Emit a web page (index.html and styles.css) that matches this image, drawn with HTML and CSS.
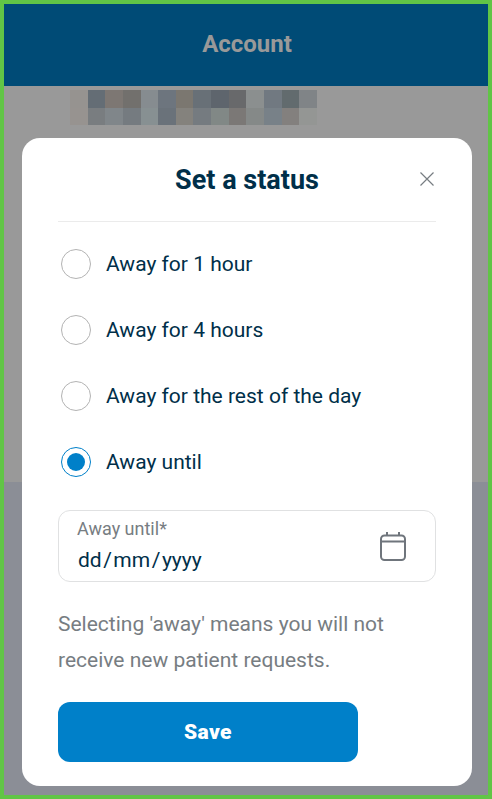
FILE: index.html
```html
<!DOCTYPE html>
<html lang="en">
<head>
    <meta charset="UTF-8">
    <meta name="viewport" content="width=device-width, initial-scale=1.0">
    <title>Account</title>
    <link rel="stylesheet" href="styles.css">
</head>

<body>
    <div class="screen">
        <header class="topbar">
            <h1>Account</h1>
        </header>
        <main class="page">
            <div class="masked-name">
                <span style="background:#969390"></span>
                <span style="background:#646d75"></span>
                <span style="background:#7d7773"></span>
                <span style="background:#72706d"></span>
                <span style="background:#868c90"></span>
                <span style="background:#6d757e"></span>
                <span style="background:#7b7770"></span>
                <span style="background:#687077"></span>
                <span style="background:#5e656d"></span>
                <span style="background:#68696b"></span>
                <span style="background:#8b8f8f"></span>
                <span style="background:#717981"></span>
                <span style="background:#626b6e"></span>
                <span style="background:#808487"></span>
                <span style="background:#979390"></span>
                <span style="background:#797d80"></span>
                <span style="background:#80868a"></span>
                <span style="background:#757b80"></span>
                <span style="background:#879092"></span>
                <span style="background:#6a727a"></span>
                <span style="background:#84827d"></span>
                <span style="background:#757b80"></span>
                <span style="background:#818886"></span>
                <span style="background:#7b7876"></span>
                <span style="background:#858988"></span>
                <span style="background:#788188"></span>
                <span style="background:#83807e"></span>
                <span style="background:#949694"></span>
            </div>
        </main>

        <div class="modal">
            <div class="modal-header">
                <h2>Set a status</h2>
                <button class="close" type="button" aria-label="Close">
                    <svg width="14" height="14" viewBox="0 0 14 14">
                        <path d="M0.5 0.5 L13.5 13.5 M13.5 0.5 L0.5 13.5" fill="none" stroke="#777d82" stroke-width="1.2"/>
                    </svg>
                </button>
            </div>
            <form class="options">
                <label class="option"><input type="radio" name="status">Away for 1 hour</label>
                <label class="option"><input type="radio" name="status">Away for 4 hours</label>
                <label class="option"><input type="radio" name="status">Away for the rest of the day</label>
                <label class="option"><input type="radio" name="status" checked>Away until</label>
            </form>
            <div class="date-field">
                <div class="date-text">
                    <span class="date-label">Away until*</span>
                    <span class="date-value">dd<i>/</i>mm<i>/</i>yyyy</span>
                </div>
                <svg class="calendar" width="28" height="31" viewBox="0 0 28 31">
                    <g fill="none" stroke="#6f757c" stroke-width="2">
                        <rect x="2" y="4.5" width="24" height="24.5" rx="3.5"/>
                        <path d="M2 10.5 H26 M8 1 V4.5 M20 1 V4.5"/>
                    </g>
                </svg>
            </div>
            <p class="hint">Selecting 'away' means you will not receive new patient requests.</p>
            <button class="save" type="button">Save</button>
        </div>
    </div>
</body>
</html>
```
FILE: styles.css
```css
*{
    box-sizing: border-box;
    font-family: Roboto, sans-serif;
}
body {
    margin: 0;
}
.screen {
    position: relative;
    height: 799px;
    border: 4px solid #61c546;
    background-color: #8b8e96;
}
.topbar {
    height: 82px;
    display: flex;
    align-items: center;
    justify-content: center;
    padding: 0 0 2px 2px;
    background-color: #004b76;
}
.topbar h1 {
    margin: 0;
    font-size: 24px;
    line-height: 30px;
    color: #999999;
}
.page {
    height: 396px;
    padding: 4px 66px;
    background-color: #999999;
}
.masked-name {
    display: grid;
    grid-template-columns: repeat(14, 1fr);
    grid-template-rows: 1fr 1fr;
    width: 247px;
    height: 35px;
}

/* dialog over the dimmed page */
.modal {
    position: absolute;
    top: 134px;
    left: 18px;
    width: 450px;
    height: 648px;
    padding: 0 36px;
    border-radius: 18px;
    background-color: #ffffff;
    color: #002f49;
}
.modal-header {
    display: grid;
    grid-template-columns: 18px 1fr 18px;
    align-items: center;
    height: 84px;
    border-bottom: 1px solid #ebebeb;
}
.modal-header h2 {
    grid-column: 2;
    margin: 0;
    font-size: 27px;
    line-height: 32px;
    text-align: center;
}
.close {
    display: flex;
    justify-content: center;
    padding: 0 0 1px;
    border: 0;
    background: none;
}
.options {
    padding-top: 9px;
}
.option {
    display: flex;
    align-items: center;
    gap: 15px;
    height: 66px;
    padding-left: 3px;
    font-size: 21px;
}
.option input {
    appearance: none;
    width: 30px;
    height: 30px;
    margin: 0;
    border: 1px solid #b3b3b3;
    border-radius: 50%;
}
.option input:checked {
    border-color: #0080c9;
    padding: 5px;
    background: #0080c9 content-box;
}
.date-field {
    display: flex;
    align-items: center;
    justify-content: space-between;
    height: 72px;
    margin-top: 15px;
    padding: 0 28px 0 18px;
    border: 1px solid #e0e1e2;
    border-radius: 12px;
}
.date-text {
    display: flex;
    flex-direction: column;
}
.date-label {
    font-size: 18px;
    line-height: 28px;
    color: #777d82;
}
.date-value {
    padding-left: 1px;
    font-size: 21px;
    line-height: 34px;
}
.date-value i {
    padding: 0 1.5px;
    font-style: normal;
}
.hint {
    margin: 24px 0;
    font-size: 21px;
    line-height: 36px;
    color: #777d82;
}
.save {
    display: block;
    width: 300px;
    height: 60px;
    border: 0;
    border-radius: 12px;
    background-color: #0080c9;
    color: #ffffff;
    font-size: 21px;
    font-weight: 900;
    letter-spacing: 0.4px;
}
```
